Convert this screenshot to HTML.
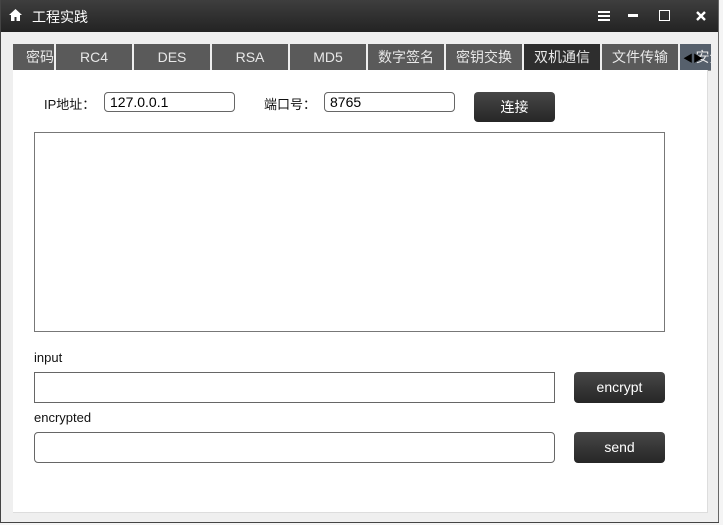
<html><head><style>
body{margin:0;width:723px;height:525px;background:#f4f4f4;position:relative;overflow:hidden;font-family:"Liberation Sans","Noto Sans CJK SC",sans-serif;}
.win{position:absolute;left:0;top:0;width:719px;height:523px;background:#efefef;}
.title{position:absolute;left:0;top:0;width:719px;height:32px;background:linear-gradient(#3e3e3e,#232323);color:#fff;font-size:14px}
.panel{position:absolute;left:13px;top:70px;width:694px;height:442px;background:#fff;border-right:1px solid #ddd;border-bottom:1px solid #ddd}
.tab{position:absolute;top:44px;height:26px;background:#5a5a5a;color:#e8e8e8;font-size:14px;text-align:center;line-height:27px;border-bottom:1px solid #999;overflow:hidden;white-space:nowrap}
.inp{position:absolute;border:1px solid #666;border-radius:4px;background:#fff;box-sizing:border-box;font-size:14px;padding-left:5px;color:#000}
.btn{position:absolute;background:linear-gradient(#474747,#262626);color:#fff;border-radius:4px;font-size:14px;text-align:center}
.lbl{position:absolute;font-size:13px;color:#111}
</style></head><body>
<div class="win">
<div class="title">
<svg style="position:absolute;left:9px;top:9px" width="13" height="12" viewBox="0 0 13 12"><path d="M6.5 0L0 6h2v6h3.5V8h2v4H11V6h2z" fill="#fff"/></svg>
<span style="position:absolute;left:32px;top:7px">工程实践</span>
<div style="position:absolute;left:598px;top:11px;width:12px;height:2px;background:#fff;box-shadow:0 4px 0 #fff,0 8px 0 #fff"></div>
<div style="position:absolute;left:628px;top:14px;width:10px;height:3px;background:#fff"></div>
<div style="position:absolute;left:659px;top:10px;width:9px;height:9px;border:1px solid #fff"></div>
<svg style="position:absolute;left:696px;top:11px" width="10" height="10" viewBox="0 0 10 10"><path d="M1 1L9 9M9 1L1 9" stroke="#fff" stroke-width="2.4"/></svg>
</div>
<div class="tab" style="left:13px;width:41px;text-align:right">密码</div>
<div class="tab" style="left:56px;width:76px">RC4</div>
<div class="tab" style="left:134px;width:76px">DES</div>
<div class="tab" style="left:212px;width:76px">RSA</div>
<div class="tab" style="left:290px;width:76px">MD5</div>
<div class="tab" style="left:368px;width:76px">数字签名</div>
<div class="tab" style="left:446px;width:76px">密钥交换</div>
<div class="tab" style="left:524px;width:76px;background:#2e2e2e">双机通信</div>
<div class="tab" style="left:602px;width:76px">文件传输</div>
<div class="tab" style="left:680px;width:31px;background:#56606c;text-align:left">&nbsp;&nbsp;&nbsp;&nbsp;安全</div>
<span style="position:absolute;left:683px;top:50px;font-size:10px;color:#000">◀▶</span>
<div class="panel"></div>
<span class="lbl" style="left:44px;top:94px">IP地址：</span>
<div class="inp" style="left:104px;top:92px;width:131px;height:20px;line-height:18px">127.0.0.1</div>
<span class="lbl" style="left:264px;top:94px">端口号：</span>
<div class="inp" style="left:324px;top:92px;width:131px;height:20px;line-height:18px">8765</div>
<div class="btn" style="left:474px;top:92px;width:81px;height:30px;line-height:30px">连接</div>
<div class="inp" style="left:34px;top:132px;width:631px;height:200px;border-color:#777;border-radius:0"></div>
<span class="lbl" style="left:34px;top:350px">input</span>
<div class="inp" style="left:34px;top:372px;width:521px;height:31px;border-radius:0"></div>
<div class="btn" style="left:574px;top:372px;width:91px;height:31px;line-height:31px">encrypt</div>
<span class="lbl" style="left:34px;top:410px">encrypted</span>
<div class="inp" style="left:34px;top:432px;width:521px;height:31px"></div>
<div class="btn" style="left:574px;top:432px;width:91px;height:31px;line-height:31px">send</div>
<div style="position:absolute;left:0;top:0;width:1px;height:523px;background:#444"></div>
<div style="position:absolute;left:718px;top:0;width:1px;height:523px;background:#666"></div>
<div style="position:absolute;left:0;top:522px;width:719px;height:1px;background:#444"></div>
</div>
</body></html>
